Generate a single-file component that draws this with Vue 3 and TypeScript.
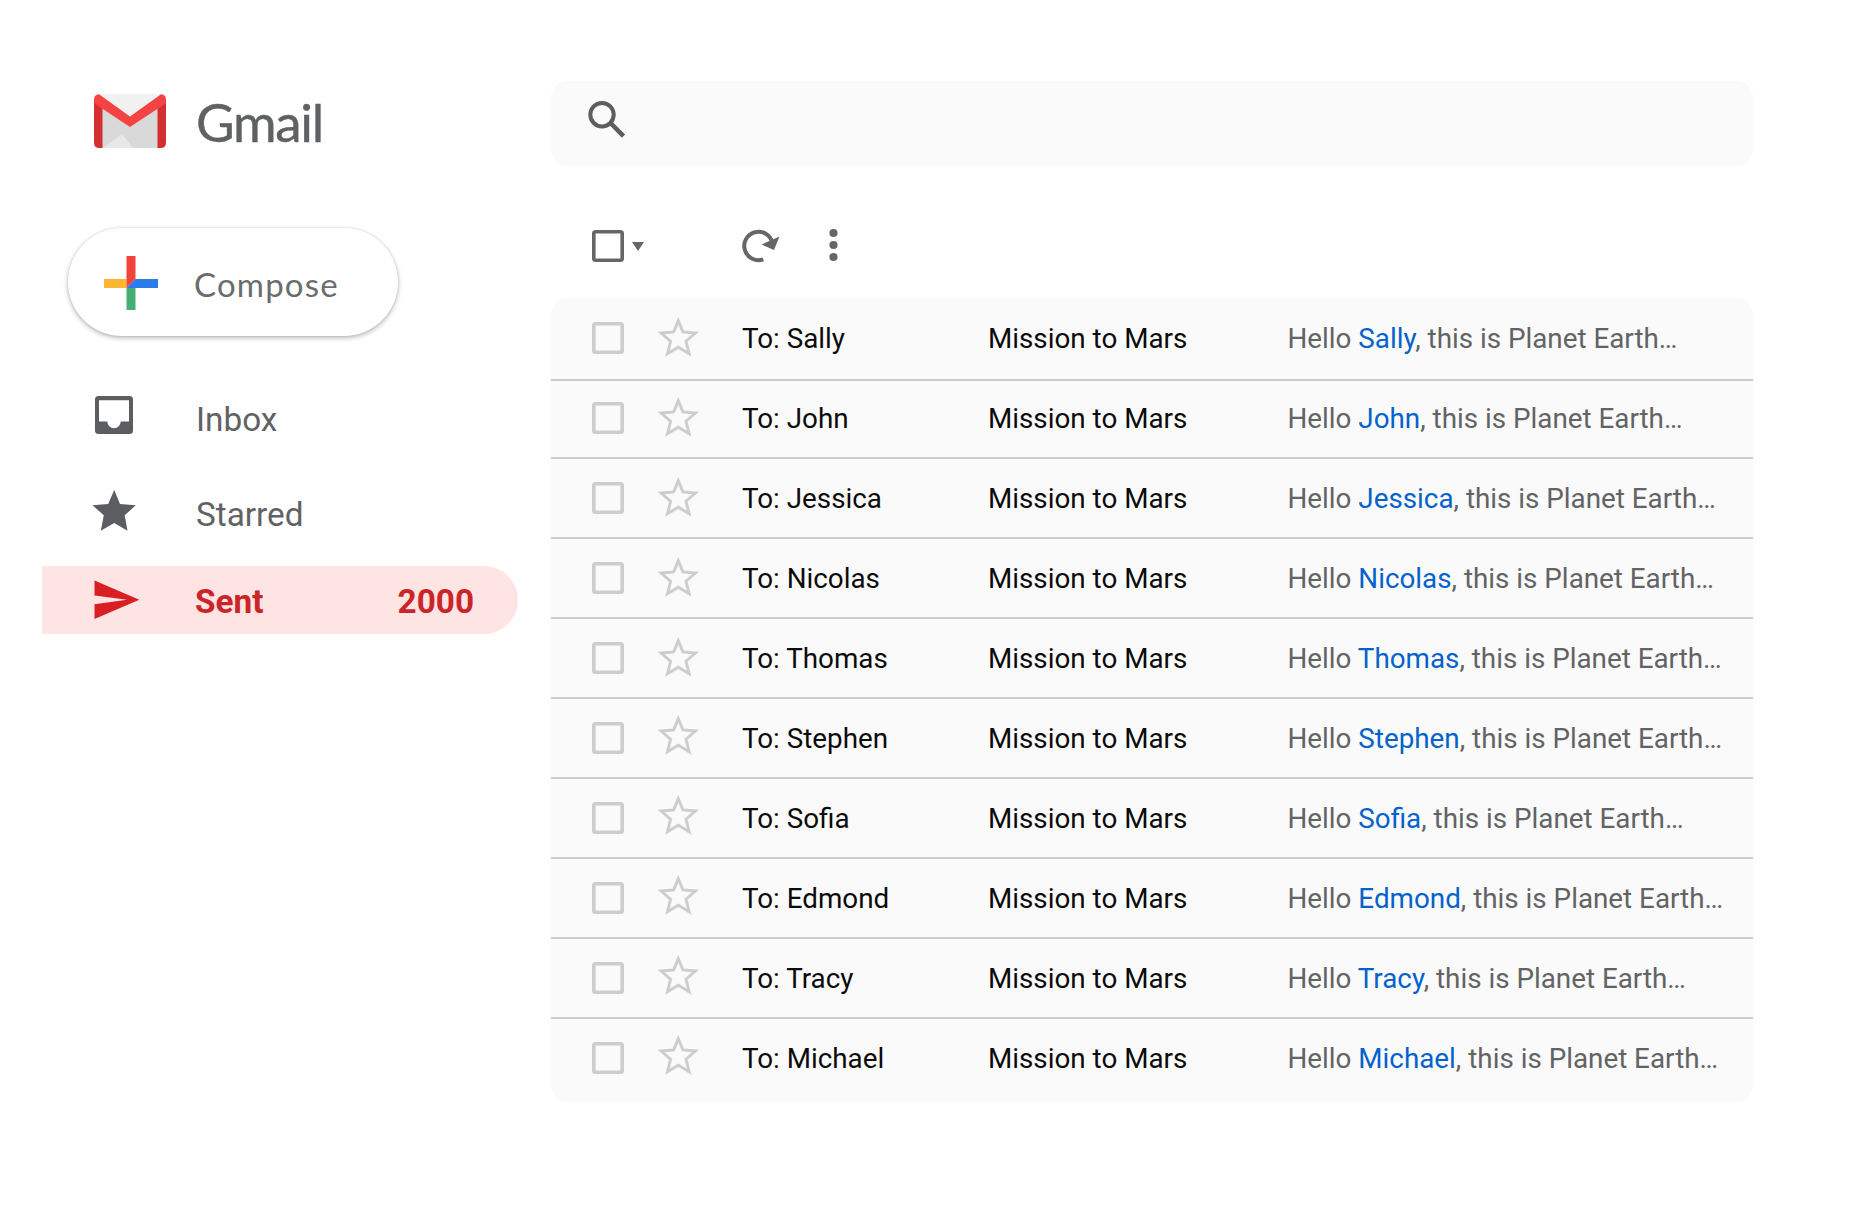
<script setup lang="ts">
const names: string[] = ['Sally', 'John', 'Jessica', 'Nicolas', 'Thomas', 'Stephen', 'Sofia', 'Edmond', 'Tracy', 'Michael']
</script>

<template>
  <div class="app">
    <aside class="side">
      <div class="brand">
        <svg class="logo" width="72" height="54" viewBox="0 0 72 54">
          <path d="M4 0H68L66 54H6Z" fill="#f1f1f1" />
          <path d="M8 12L36 33L64 12V54H8Z" fill="#d9d9d9" />
          <path d="M9 54L28 40L39 54Z" fill="#e8e8e8" />
          <path d="M0 5L8.500 11V54H5.500Q0 54 0 48.500Z" fill="#d32f31" />
          <path d="M72 5L63.500 11V54H66.500Q72 54 72 48.500Z" fill="#d32f31" />
          <path d="M5 0.300L36 22.500L67 0.300Q72 0.500 72 6Q72 9 70 10.500L36 33L2 10.500Q0 9 0 6Q0 0.500 5 0.300Z" fill="#f44342" />
        </svg>
        <span class="word">Gmail</span>
      </div>
      <button class="compose">
        <svg width="54" height="54" viewBox="0 0 54 54">
          <path d="M0 23H22.500V32H0Z" fill="#fdb633" />
          <path d="M22.500 32H31.500V54H22.500Z" fill="#44af72" />
          <path d="M22.500 0H31.500V23L22.500 32Z" fill="#f4433b" />
          <path d="M31.500 23H54V32H22.500Z" fill="#2c7bea" />
        </svg>
        <span>Compose</span>
      </button>
      <nav>
        <a class="item inbox">
          <svg width="46" height="46" viewBox="0 0 46 46">
            <path fill-rule="evenodd" d="M5 4H35.500Q39 4 39 7.500V38.500Q39 42 35.500 42H4.500Q1 42 1 38.500V7.500Q1 4 4.500 4ZM5 8.300V29.500H13.300A6.700 6.700 0 0 0 26.700 29.500H35V8.300Z" fill="#5b5d61" />
          </svg>
          <span>Inbox</span>
        </a>
        <a class="item starred">
          <svg width="46" height="46" viewBox="0 0 46 46">
            <path d="M20.200 2L26 16L41.800 17.300L30.700 27.300L33.500 42.700L20.200 35L6.800 42.700L9.800 27.300L-1.500 17.300L14.200 16Z" fill="#5b5d61" />
          </svg>
          <span>Starred</span>
        </a>
        <a class="item sent">
          <svg width="46" height="46" viewBox="0 0 46 46">
            <path d="M.500 3.500L45.300 22.700L.500 42V27.300L33 22.700L.500 18.500Z" fill="#d71f24" />
          </svg>
          <span>Sent</span>
          <span class="count">2000</span>
        </a>
      </nav>
    </aside>

    <main>
      <div class="search">
        <svg width="38" height="38" viewBox="0 0 38 38" fill="none" stroke="#5d5d5f">
          <circle cx="14" cy="13.700" r="11.700" stroke-width="4" />
          <path d="M22.500 22L35.500 35.200" stroke-width="4.600" />
        </svg>
      </div>
      <div class="tools">
        <svg class="box" width="32" height="32" viewBox="0 0 32 32"><rect x="1.800" y="1.800" width="28.400" height="28.400" rx="1.800" /></svg>
        <svg class="caret" width="12" height="9" viewBox="0 0 12 9"><path d="M0 0H12L6 9Z" fill="#666" /></svg>
        <svg class="reload" width="40" height="34" viewBox="0 0 40 34">
          <path d="M22.300 29.300A14.200 14.200 0 1 1 31.300 12.800" fill="none" stroke="#666" stroke-width="4" />
          <path d="M20.500 14.500L38.500 6.500L33 20Z" fill="#666" />
        </svg>
        <svg class="dots" width="8" height="32" viewBox="0 0 8 32" fill="#666">
          <circle cx="4.500" cy="4" r="4.100" /><circle cx="4.500" cy="16" r="4.100" /><circle cx="4.500" cy="28" r="4.100" />
        </svg>
      </div>
      <ul class="list">
        <li v-for="(name, i) in names" :key="name">
          <svg class="box" width="32" height="32" viewBox="0 0 32 32"><rect x="1.800" y="1.800" width="28.400" height="28.400" rx="1.800" /></svg>
          <svg class="star" :class="{ raised: i > 4 }" width="44" height="42" viewBox="0 0 44 42">
            <path d="M22.300 4.800L26.900 15.900L39.500 17L30 25.200L33.100 37.700L22.300 31.200L11.500 37.700L14.600 25.200L5.100 17L17.700 15.900Z" fill="none" stroke="#cdcdcd" stroke-width="2.900" stroke-miterlimit="10" />
          </svg>
          <span class="to">To: {{ name }}</span>
          <span class="subject">Mission to Mars</span>
          <span class="preview">Hello <b>{{ name }}</b>, this is Planet Earth…</span>
        </li>
      </ul>
    </main>
  </div>
</template>

<style>
body { margin: 0; background: #fff; }
</style>

<style scoped>
.app { width: 1860px; height: 1222px; display: flex; background: #fff; font-family: Roboto, "Liberation Sans", sans-serif; overflow: hidden; }
svg { display: block; flex: none; overflow: visible; }
.side { width: 551px; flex: none; }
.brand { display: flex; height: 54px; margin: 94px 0 0 94px; }
.word { margin: -4px 0 0 30px; font: 400 53px/64px Lato, sans-serif; color: #5f6163; letter-spacing: -1.300px; -webkit-text-stroke: 0.400px #5f6163; }
.compose { display: flex; align-items: center; box-sizing: border-box; width: 330px; height: 108px; margin: 80px 0 0 68px; padding: 1px 0 0 36px; border: 0; border-radius: 54px; background: #fff; box-shadow: 0 2px 5px rgba(0,0,0,.27), 0 0 3px rgba(0,0,0,.1); }
.compose span { margin: 3px 0 0 36px; font: 400 33px/40px Lato, sans-serif; color: #6b6d6d; letter-spacing: 1.200px; }
.item { display: flex; align-items: center; box-sizing: border-box; width: 476px; height: 68px; margin-left: 42px; padding-left: 52px; color: #616264; font-size: 33.300px; line-height: 40px; }
.item span { margin-left: 56px; }
.inbox { margin-top: 46px; }
.inbox svg { margin-top: -2px; }
.inbox span, .starred span { margin-top: 8px; }
.starred { margin-top: 27px; }
.starred svg { margin-top: 0; }
.sent { margin-top: 21px; background: #fee4e2; border-radius: 0 34px 34px 0; color: #cb2529; font-weight: 700; }
.sent span { margin: 3px 0 0 55px; }
.sent .count { margin-left: auto; margin-right: 44px; }
.search { box-sizing: border-box; width: 1202px; height: 85px; margin-top: 81px; padding: 20px 0 0 37px; border-radius: 16px; background: #fafafa; }
.tools { display: flex; height: 132px; box-sizing: border-box; padding: 64px 0 0 41px; }
.box rect { fill: none; stroke: #666; stroke-width: 3.600px; }
.caret { margin: 12px 0 0 8px; }
.reload { margin: 0 0 0 97px; }
.dots { margin: -1px 0 0 48px; }
.list { width: 1202px; height: 804px; margin: 0; padding: 0; list-style: none; border-radius: 16px; background: #fafafa; }
li { display: flex; box-sizing: border-box; height: 80px; padding: 23px 0 0 41px; border-bottom: 2px solid #c9caca; font-size: 27.800px; line-height: 34px; white-space: nowrap; color: #0b0b0b; }
li:first-child { height: 83px; padding-top: 24px; }
li:nth-child(2) { height: 78px; padding-top: 21px; }
li:last-child { height: 83px; border: 0; }
li .box rect { stroke: #cdcdcd; }
.star { margin: -6px 0 0 32px; }
.star.raised { margin-top: -8px; }
.to { width: 246px; margin-left: 42px; }
.subject { width: 299.500px; }
.preview { color: #626364; }
b { font-weight: 400; color: #0462cb; }
</style>
